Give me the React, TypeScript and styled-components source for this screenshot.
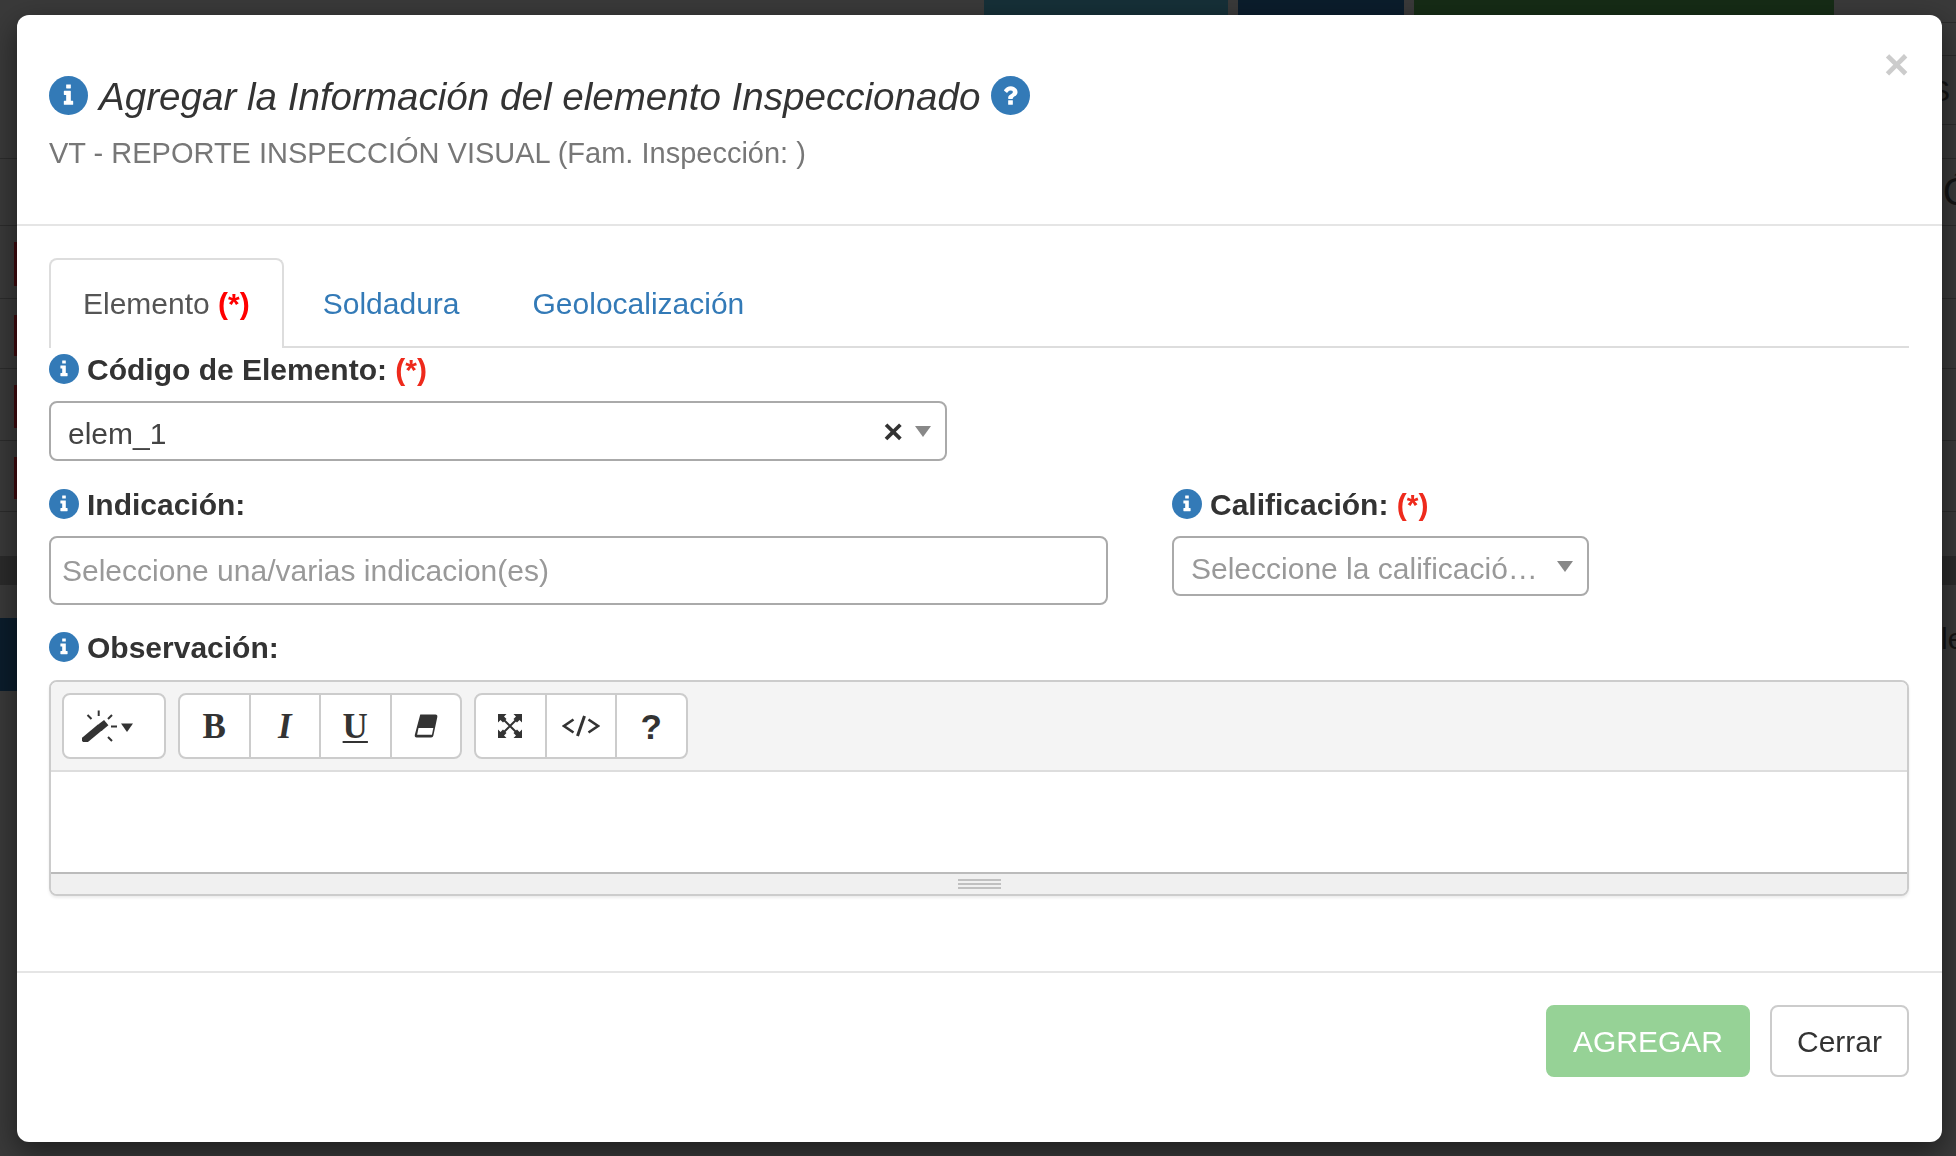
import React from "react";
import styled, { createGlobalStyle } from "styled-components";

const Global = createGlobalStyle`
  html, body { margin: 0; padding: 0; height: 100%; overflow: hidden; background: #383838; }
  body { font-family: "Liberation Sans", Arial, sans-serif; color: #333; font-size: 30px; }
  * { box-sizing: border-box; }
`;

const Backdrop = styled.div`
  position: fixed;
  inset: 0;
  overflow: hidden;
  background: #3a3a3a;
  display: flex;
  flex-direction: column;
`;
const BackRow = styled.div<{ $h: number; $bg?: string; $line?: boolean; $sideLine?: boolean }>`
  flex: none;
  height: ${(p) => p.$h}px;
  background: ${(p) =>
    p.$sideLine
      ? "linear-gradient(#2c2c2c, #2c2c2c) right bottom / 40px 1px no-repeat"
      : p.$bg || "transparent"};
  border-bottom: ${(p) => (p.$line ? "1px solid #2c2c2c" : "0")};
  display: flex;
  align-items: center;
  position: relative;
`;
const BackBlocks = styled.div`
  flex: none;
  height: 15px;
  display: flex;
  padding-left: 984px;
  gap: 10px;
`;
const BackBlock = styled.div<{ $w: number; $bg: string }>`
  width: ${(p) => p.$w}px;
  background: ${(p) => p.$bg};
`;
const BackMark = styled.div`
  position: absolute;
  left: 14px;
  top: 16px;
  bottom: 12px;
  width: 5px;
  background: #3f0a0e;
`;
const BackNavy = styled.div`
  position: absolute;
  left: 0;
  top: 0;
  bottom: 0;
  width: 30px;
  background: #0b1d2c;
`;
const BackText = styled.span<{ $size: number; $left: number }>`
  font-size: ${(p) => p.$size}px;
  line-height: 1;
  color: #141414;
  margin-left: ${(p) => p.$left}px;
  white-space: nowrap;
`;

const Modal = styled.div`
  position: relative;
  width: 1925px;
  height: 1127px;
  margin: 15px 0 0 17px;
  background: #fff;
  border-radius: 12px;
  box-shadow: 0 10px 30px rgba(0, 0, 0, 0.5);
  display: flex;
  flex-direction: column;
`;
const Header = styled.header`
  flex: none;
  height: 211px;
  padding: 61px 32px 0;
  border-bottom: 2px solid #e5e5e5;
`;
const TitleRow = styled.div`
  display: flex;
  align-items: center;
  gap: 11px;
  height: 39px;
`;
const Title = styled.h4`
  margin: 0;
  font-size: 38.6px;
  line-height: 39px;
  font-weight: 400;
  font-style: italic;
  color: #333;
  white-space: nowrap;
  padding-top: 1px;
`;
const Subtitle = styled.div`
  margin-top: 17px;
  font-size: 29px;
  line-height: 43px;
  color: #777;
  white-space: nowrap;
`;
const Close = styled.button`
  position: absolute;
  top: 27px;
  right: 33px;
  border: 0;
  padding: 0;
  background: none;
  color: #ccc;
  font: 700 43px/45px "Liberation Sans", Arial, sans-serif;
`;
const Body = styled.main`
  flex: 1;
  padding: 32px 33px 0 32px;
  display: flex;
  flex-direction: column;
`;
const Tabs = styled.nav`
  flex: none;
  display: flex;
  gap: 5px;
  height: 90px;
  border-bottom: 2px solid #ddd;
`;
const Tab = styled.a<{ $active?: boolean }>`
  display: block;
  height: 90px;
  padding: 22px 32px 0;
  font-size: 30px;
  line-height: 43px;
  white-space: nowrap;
  color: ${(p) => (p.$active ? "#555" : "#337ab7")};
  background: ${(p) => (p.$active ? "#fff" : "transparent")};
  border: 2px solid ${(p) => (p.$active ? "#ddd" : "transparent")};
  border-bottom: 0;
  border-radius: 8px 8px 0 0;
`;
const TabStar = styled.b`
  color: #f00;
`;
const Label = styled.label`
  display: flex;
  align-items: center;
  gap: 8px;
  height: 43px;
  font-size: 30px;
  font-weight: 700;
  line-height: 43px;
  color: #333;
  white-space: nowrap;
  svg {
    flex: none;
    margin-top: -1px;
  }
`;
const Star = styled.span`
  color: #ee2a1c;
`;
const FieldRow = styled.div`
  display: flex;
  gap: 64px;
  margin-top: 22px;
`;
const Field = styled.div<{ $w?: number }>`
  flex: none;
  width: ${(p) => (p.$w ? `${p.$w}px` : "auto")};
`;
const Select = styled.div<{ $w: number }>`
  display: flex;
  align-items: center;
  width: ${(p) => p.$w}px;
  height: 60px;
  margin-top: 10px;
  padding: 0 14px 0 17px;
  border: 2px solid #aaa;
  border-radius: 8px;
  font-size: 30px;
  background: #fff;
`;
const SelectValue = styled.span<{ $placeholder?: boolean; $drop?: number }>`
  flex: 1;
  min-width: 0;
  padding-top: ${(p) => p.$drop ?? 3}px;
  white-space: nowrap;
  color: ${(p) => (p.$placeholder ? "#999" : "#444")};
`;
const Clear = styled.span`
  font-size: 34px;
  line-height: 34px;
  font-weight: 700;
  color: #333;
  margin-right: 12px;
`;
const Caret = styled.i`
  flex: none;
  width: 0;
  height: 0;
  border-style: solid;
  border-width: 11px 8px 0;
  border-color: #888 transparent transparent;
`;
const TextBox = styled.div`
  height: 69px;
  margin-top: 10px;
  padding: 8px 10px 0 11px;
  border: 2px solid #aaa;
  border-radius: 8px;
  font-size: 30px;
  line-height: 50px;
  color: #999;
  white-space: nowrap;
`;
const ObservationField = styled.div`
  margin-top: 21px;
`;
const Editor = styled.div`
  margin-top: 11px;
  height: 216px;
  border: 2px solid #ccc;
  border-radius: 8px;
  background: #fff;
  box-shadow: 0 2px 3px rgba(0, 0, 0, 0.08);
  display: flex;
  flex-direction: column;
  overflow: hidden;
`;
const Toolbar = styled.div`
  flex: none;
  height: 90px;
  padding: 11px 0 0 11px;
  background: #f4f4f4;
  border-bottom: 2px solid #ddd;
  display: flex;
  gap: 12px;
`;
const BtnGroup = styled.div`
  display: flex;
  height: 66px;
`;
const ToolBtn = styled.span<{ $w?: number; $start?: boolean }>`
  display: flex;
  align-items: center;
  justify-content: ${(p) => (p.$start ? "flex-start" : "center")};
  padding-left: ${(p) => (p.$start ? 18 : 0)}px;
  width: ${(p) => p.$w || 72.5}px;
  height: 66px;
  background: #fff;
  border: 2px solid #ccc;
  color: #333;
  & + & {
    margin-left: -2px;
  }
  &:first-child {
    border-radius: 8px 0 0 8px;
  }
  &:last-child {
    border-radius: 0 8px 8px 0;
  }
  &:first-child:last-child {
    border-radius: 8px;
  }
`;
const SerifGlyph = styled.span<{ $italic?: boolean; $underline?: boolean }>`
  font-family: "Liberation Serif", "Times New Roman", serif;
  font-size: 35px;
  line-height: 35px;
  font-weight: 700;
  font-style: ${(p) => (p.$italic ? "italic" : "normal")};
  text-decoration: ${(p) => (p.$underline ? "underline" : "none")};
  text-underline-offset: 3px;
  text-decoration-thickness: 2px;
`;
const HelpGlyph = styled.span`
  font-size: 35px;
  line-height: 35px;
  font-weight: 700;
`;
const EditArea = styled.div`
  flex: none;
  height: 100px;
  background: #fff;
`;
const Statusbar = styled.div`
  flex: 1;
  background: #f0f0f0;
  border-top: 2px solid #bbb;
  display: flex;
  align-items: center;
  justify-content: center;
`;
const Grip = styled.div`
  width: 43px;
  height: 10px;
  background: repeating-linear-gradient(#c0c0c0 0 2px, transparent 2px 4px);
`;
const Footer = styled.footer`
  flex: none;
  height: 171px;
  padding: 32px 33px 0 0;
  border-top: 2px solid #e5e5e5;
  display: flex;
  justify-content: flex-end;
  align-items: flex-start;
  gap: 20px;
`;
const Button = styled.button<{ $primary?: boolean }>`
  height: 72px;
  padding: 0 25px;
  font: 400 30px/43px "Liberation Sans", Arial, sans-serif;
  color: ${(p) => (p.$primary ? "#fff" : "#333")};
  background: ${(p) => (p.$primary ? "#96d296" : "#fff")};
  border: 2px solid ${(p) => (p.$primary ? "#96d296" : "#ccc")};
  border-radius: 8px;
`;

const INFO_GLYPH =
  "M1024 1376v-160q0-14-9-23t-23-9h-96v-512q0-14-9-23t-23-9h-320q-14 0-23 9t-9 23v160q0 14 9 23t23 9h96v320h-96q-14 0-23 9t-9 23v160q0 14 9 23t23 9h448q14 0 23-9t9-23zm-128-896v-160q0-14-9-23t-23-9h-192q-14 0-23 9t-9 23v160q0 14 9 23t23 9h192q14 0 23-9t9-23z";
const QUESTION_GLYPH =
  "M896 1376v-192q0-14-9-23t-23-9h-192q-14 0-23 9t-9 23v192q0 14 9 23t23 9h192q14 0 23-9t9-23zm256-672q0-88-55.500-163t-138.500-116-170-41q-243 0-371 213-15 24 8 42l132 100q7 6 19 6 16 0 25-12 53-68 86-92 34-24 86-24 48 0 85.500 26t37.500 59q0 38-20 61t-68 45q-63 28-115.500 86.500t-52.500 125.500v36q0 14 9 23t23 9h192q14 0 23-9t9-23q0-19 21.500-49.500t54.500-49.500q32-18 49-28.500t46-35 44.500-48 28-60.500 12.500-81z";

const CircleIcon = ({ d, size }: { d: string; size: number }) => (
  <svg width={size} height={size} viewBox="0 128 1536 1536" style={{ flex: "none" }}>
    <circle cx="768" cy="896" r="768" fill="#337ab7" />
    <path d={d} fill="#fff" transform="translate(768 896) scale(.72) translate(-768 -896)" />
  </svg>
);
const Info = () => <CircleIcon d={INFO_GLYPH} size={30} />;

const MagicIcon = () => (
  <svg width="52" height="32" viewBox="0 0 52 32" fill="none" stroke="#333">
    <path d="M3.500 29.500 L15.500 19.500" strokeWidth="7" strokeLinecap="square" />
    <path d="M20 16 L21.500 14.800" strokeWidth="7" strokeLinecap="square" />
    <path d="M16.700 .5V6 M5.500 5 L9.500 9 M30 5 L26 9 M29 16.500H35 M26 27 L30 31" strokeWidth="2" />
    <path d="M39 13.500H51L45 22Z" fill="#333" stroke="none" />
  </svg>
);
const EraserIcon = () => (
  <svg width="24" height="24" viewBox="0 0 23 23">
    <path d="M6 .5H20.500Q22.800 .5 22.300 3L18.600 20.500Q18.200 22.500 16.500 22.500H2.500Q.3 22.500 .8 20Z" fill="#333" />
    <path d="M4.300 13.500H18.500L17.200 19.800H3Z" fill="#fff" />
  </svg>
);
const ExpandIcon = () => (
  <svg width="24" height="24" viewBox="0 0 24 24" fill="#333">
    <path d="M4 4 L20 20 M20 4 L4 20" stroke="#333" strokeWidth="2" fill="none" />
    <path d="M0 0H8.500L6 2.500L8.500 5L5 8.500L2.500 6L0 8.500Z M24 0H15.500L18 2.500L15.500 5L19 8.500L21.500 6L24 8.500Z M0 24H8.500L6 21.500L8.500 19L5 15.500L2.500 18L0 15.500Z M24 24H15.500L18 21.500L15.500 19L19 15.500L21.500 18L24 15.500Z" />
  </svg>
);
const CodeIcon = () => (
  <svg width="38" height="22" viewBox="0 0 38 22" fill="none" stroke="#333" strokeWidth="2.600">
    <path d="M11.500 4.500 L2 11 L11.500 17.500 M26.500 4.500 L36 11 L26.500 17.500" />
    <path d="M22.500 1 L15.500 21" strokeWidth="3" />
  </svg>
);

export default function App() {
  return (
    <>
      <Global />
      <Backdrop>
        <BackBlocks>
          <BackBlock $w={244} $bg="#163038" />
          <BackBlock $w={166} $bg="#0b1d2c" />
          <BackBlock $w={420} $bg="#162c16" />
        </BackBlocks>
        <BackRow $h={8} $sideLine />
        <BackRow $h={33} $sideLine />
        <BackRow $h={69} $sideLine><BackText $size={30} $left={1930}>S</BackText></BackRow>
        <BackRow $h={34} $line />
        <BackRow $h={67} $line><BackText $size={38} $left={1943}>Ó</BackText></BackRow>
        <BackRow $h={73} $line><BackMark /></BackRow>
        <BackRow $h={70} $line><BackMark /></BackRow>
        <BackRow $h={72} $line><BackMark /></BackRow>
        <BackRow $h={71} $line><BackMark /></BackRow>
        <BackRow $h={44} />
        <BackRow $h={29} $bg="#2b2b2b" />
        <BackRow $h={33} />
        <BackRow $h={42}><BackNavy /><BackText $size={30} $left={1941}>le</BackText></BackRow>
        <BackRow $h={31}><BackNavy /></BackRow>
      </Backdrop>
      <Modal>
        <Close type="button">×</Close>
        <Header>
          <TitleRow>
            <CircleIcon d={INFO_GLYPH} size={39} />
            <Title>Agregar la Información del elemento Inspeccionado</Title>
            <CircleIcon d={QUESTION_GLYPH} size={39} />
          </TitleRow>
          <Subtitle>VT - REPORTE INSPECCIÓN VISUAL (Fam. Inspección: )</Subtitle>
        </Header>
        <Body>
          <Tabs>
            <Tab $active>
              Elemento <TabStar>(*)</TabStar>
            </Tab>
            <Tab>Soldadura</Tab>
            <Tab>Geolocalización</Tab>
          </Tabs>
          <Label>
            <Info />
            <span>
              Código de Elemento: <Star>(*)</Star>
            </span>
          </Label>
          <Select $w={898}>
            <SelectValue $drop={5}>elem_1</SelectValue>
            <Clear>×</Clear>
            <Caret />
          </Select>
          <FieldRow>
            <Field $w={1059}>
              <Label>
                <Info />
                <span>Indicación:</span>
              </Label>
              <TextBox>Seleccione una/varias indicacion(es)</TextBox>
            </Field>
            <Field>
              <Label>
                <Info />
                <span>
                  Calificación: <Star>(*)</Star>
                </span>
              </Label>
              <Select $w={417}>
                <SelectValue $placeholder $drop={5}>Seleccione la calificació…</SelectValue>
                <Caret />
              </Select>
            </Field>
          </FieldRow>
          <ObservationField>
            <Label>
              <Info />
              <span>Observación:</span>
            </Label>
            <Editor>
              <Toolbar>
                <BtnGroup>
                  <ToolBtn $w={104} $start>
                    <MagicIcon />
                  </ToolBtn>
                </BtnGroup>
                <BtnGroup>
                  <ToolBtn><SerifGlyph>B</SerifGlyph></ToolBtn>
                  <ToolBtn><SerifGlyph $italic>I</SerifGlyph></ToolBtn>
                  <ToolBtn><SerifGlyph $underline>U</SerifGlyph></ToolBtn>
                  <ToolBtn><EraserIcon /></ToolBtn>
                </BtnGroup>
                <BtnGroup>
                  <ToolBtn><ExpandIcon /></ToolBtn>
                  <ToolBtn><CodeIcon /></ToolBtn>
                  <ToolBtn><HelpGlyph>?</HelpGlyph></ToolBtn>
                </BtnGroup>
              </Toolbar>
              <EditArea />
              <Statusbar>
                <Grip />
              </Statusbar>
            </Editor>
          </ObservationField>
        </Body>
        <Footer>
          <Button type="button" $primary>AGREGAR</Button>
          <Button type="button">Cerrar</Button>
        </Footer>
      </Modal>
    </>
  );
}
